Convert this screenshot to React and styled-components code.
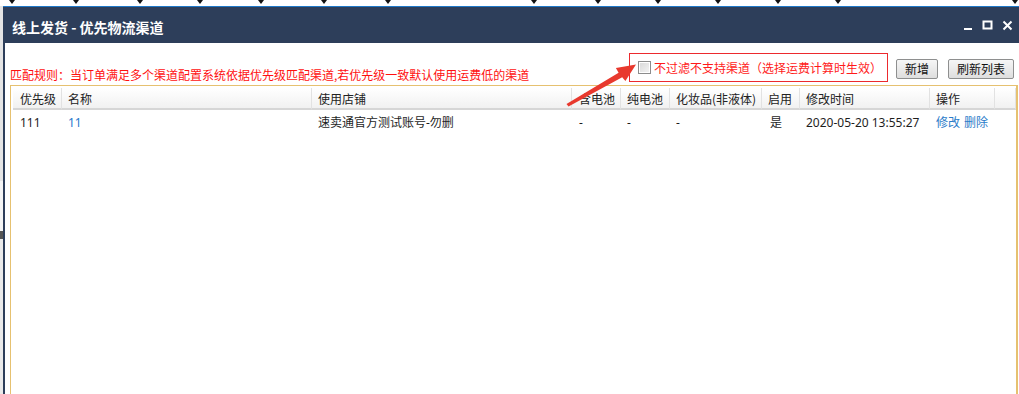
import React from "react";
import styled, { createGlobalStyle } from "styled-components";

const GlobalStyle = createGlobalStyle`
  html, body {
    margin: 0;
    padding: 0;
    background: #ffffff;
    overflow: hidden;
  }
  body {
    font-family: "Noto Sans", "Noto Sans CJK SC", sans-serif;
    font-size: 12px;
    color: #222;
  }
`;

const Page = styled.div`
  position: relative;
  width: 1019px;
  height: 394px;
  overflow: hidden;
  display: flex;
  flex-direction: column;
`;

const CaretStrip = styled.div`
  height: 6px;
  display: flex;
  align-items: flex-start;
  background: #fff;
`;

const Caret = styled.span`
  flex: none;
  margin-left: ${(p) => p.$gap}px;
  width: 0;
  height: 0;
  border-left: 3px solid transparent;
  border-right: 3px solid transparent;
  border-top: 4px solid #111;
`;

const Stage = styled.div`
  flex: 1;
  display: flex;
  min-height: 0;
`;

const Gutter = styled.div`
  width: 3px;
  flex: none;
  background: linear-gradient(#e4e4e4 0 45%, #f4f4f4 45% 58%, #555 58% 60%, #eaeaea 60%);
`;

const Dialog = styled.div`
  flex: 1;
  display: flex;
  flex-direction: column;
  border-top: 1px solid #1f78c8;
  border-left: 1px solid #1f78c8;
  min-width: 0;
`;

const TitleBar = styled.div`
  height: 36px;
  flex: none;
  background: #2d3e5a;
  display: flex;
  align-items: center;
  padding: 0 6px 0 7px;
  border-left: 2px solid #2d3e5a;
  margin-left: -1px;
`;

const Title = styled.div`
  flex: 1;
  color: #fff;
  font-size: 14px;
  font-weight: bold;
  font-family: "Noto Sans CJK SC", "Noto Sans", sans-serif;
  padding-top: 4px;
`;

const WinButtons = styled.div`
  display: flex;
  align-items: center;
  gap: 9px;
  padding-top: 2px;
`;

const Body = styled.div`
  flex: 1;
  display: flex;
  flex-direction: column;
  border-left: 2px solid #2d3e5a;
  margin-left: -1px;
  padding-left: 5px;
  background: #fff;
  min-height: 0;
`;

const Toolbar = styled.div`
  height: 41px;
  flex: none;
  display: flex;
  align-items: flex-end;
  justify-content: space-between;
  padding-bottom: 1px;
`;

const Rule = styled.div`
  color: #ff1010;
  font-size: 12px;
  font-family: "Noto Sans CJK SC", sans-serif;
  line-height: 16px;
  padding-bottom: 1px;
  white-space: nowrap;
`;

const Actions = styled.div`
  display: flex;
  align-items: center;
  padding-right: 5px;
  align-self: stretch;
  padding-top: 10px;
  padding-bottom: 2px;
`;

const FilterBox = styled.label`
  height: 29px;
  box-sizing: border-box;
  border: 1px solid #ec2a2e;
  display: flex;
  align-items: center;
  padding: 0 5px 0 8px;
  margin-right: 8px;
  color: #ff1a1a;
  font-family: "Noto Sans CJK SC", sans-serif;
  font-size: 12px;
  white-space: nowrap;
`;

const Check = styled.span`
  width: 11px;
  height: 11px;
  border: 1px solid #8c8c8c;
  background: linear-gradient(135deg, #d8d8d8, #f4f4f4);
  box-shadow: inset 0 0 0 1px #fff;
  margin-right: 3px;
  flex: none;
`;

const Button = styled.button`
  height: 20px;
  padding: 0 ${(p) => p.$pad}px;
  margin-left: ${(p) => p.$gap}px;
  border: 1px solid #8e8f8f;
  border-radius: 2px;
  background: linear-gradient(#f6f6f6, #dedede);
  font-family: "Noto Sans CJK SC", sans-serif;
  font-size: 12px;
  color: #111;
  line-height: 18px;
  align-self: center;
  margin-top: 2px;
`;

const TableBox = styled.div`
  flex: 1;
  border: 1px solid #e6c170;
  border-right-width: 2px;
  border-bottom: none;
  margin-right: 1px;
  padding: 2px 0 0 2px;
  box-sizing: border-box;
`;

const Grid = styled.div`
  display: grid;
  grid-template-columns: 49px 250px 260px 49px 49px 92px 38px 130px 65px 1fr;
`;

const HeadCell = styled.div`
  height: 20px;
  line-height: 21px;
  padding-left: ${(p) => p.$pad ?? 6}px;
  border-right: 1px solid #e2e2e2;
  border-bottom: 2px solid #d6d6d6;
  background: linear-gradient(#ffffff, #f1f1f1);
  font-family: "Noto Sans CJK SC", sans-serif;
  white-space: nowrap;
  color: #222;
  &:last-child {
    border-right: none;
  }
`;

const Cell = styled.div`
  height: 26px;
  line-height: 26px;
  padding-left: ${(p) => p.$pad ?? 6}px;
  white-space: nowrap;
  font-family: "Noto Sans", "Noto Sans CJK SC", sans-serif;
  color: ${(p) => (p.$link ? "#1f78cc" : "#1e1e1e")};
`;

const Link = styled.span`
  color: #2b7bc9;
  margin-right: 4px;
`;

const Arrow = styled.svg`
  position: absolute;
  left: 0;
  top: 0;
  pointer-events: none;
`;

const caretX = [12, 76, 140, 200, 261, 324, 388, 534, 598, 658, 718, 778, 838, 1015];

const columns = [
  { label: "优先级", pad: 7 },
  { label: "名称" },
  { label: "使用店铺" },
  { label: "含电池", pad: 7 },
  { label: "纯电池" },
  { label: "化妆品(非液体)" },
  { label: "启用" },
  { label: "修改时间" },
  { label: "操作" },
  { label: "" },
];

// margins between carets, taken from their centre positions
const caretGaps = caretX.map((x, i) => (i === 0 ? x - 3 : x - caretX[i - 1] - 6));

function WindowIcons() {
  return (
    <WinButtons>
      <svg width="10" height="12" viewBox="0 0 10 12">
        <rect x="1" y="8" width="8" height="2" fill="#fff" />
      </svg>
      <svg width="11" height="12" viewBox="0 0 11 12">
        <rect x="1.5" y="1.5" width="8" height="7" fill="none" stroke="#fff" strokeWidth="2" />
      </svg>
      <svg width="11" height="12" viewBox="0 0 11 12">
        <path d="M1.5 1.5 L9.5 9.5 M9.5 1.5 L1.5 9.5" stroke="#fff" strokeWidth="2" />
      </svg>
    </WinButtons>
  );
}

export default function App() {
  return (
    <Page>
      <GlobalStyle />
      <CaretStrip>
        {caretGaps.map((gap, i) => (
          <Caret key={i} $gap={gap} />
        ))}
      </CaretStrip>
      <Stage>
        <Gutter />
        <Dialog>
          <TitleBar>
            <Title>线上发货 - 优先物流渠道</Title>
            <WindowIcons />
          </TitleBar>
          <Body>
            <Toolbar>
              <Rule>匹配规则：当订单满足多个渠道配置系统依据优先级匹配渠道,若优先级一致默认使用运费低的渠道</Rule>
              <Actions>
                <FilterBox>
                  <Check />
                  不过滤不支持渠道（选择运费计算时生效）
                </FilterBox>
                <Button $pad={8} $gap={0}>新增</Button>
                <Button $pad={8} $gap={10}>刷新列表</Button>
              </Actions>
            </Toolbar>
            <TableBox>
              <Grid>
                {columns.map((c, i) => (
                  <HeadCell key={i} $pad={c.pad}>{c.label}</HeadCell>
                ))}
                <Cell $pad={7}>111</Cell>
                <Cell $link>11</Cell>
                <Cell>速卖通官方测试账号-勿删</Cell>
                <Cell $pad={7}>-</Cell>
                <Cell>-</Cell>
                <Cell>-</Cell>
                <Cell $pad={8}>是</Cell>
                <Cell>2020-05-20 13:55:27</Cell>
                <Cell>
                  <Link>修改</Link>
                  <Link>删除</Link>
                </Cell>
                <Cell />
              </Grid>
            </TableBox>
          </Body>
        </Dialog>
      </Stage>
      <Arrow width="1019" height="394" viewBox="0 0 1019 394">
        <polygon
          points="566.5,104.1 618.6,72.8 615.9,67.9 636,64.5 625.4,81.1 622.2,77.2 568.5,106.4"
          fill="#e8392e"
        />
      </Arrow>
    </Page>
  );
}
